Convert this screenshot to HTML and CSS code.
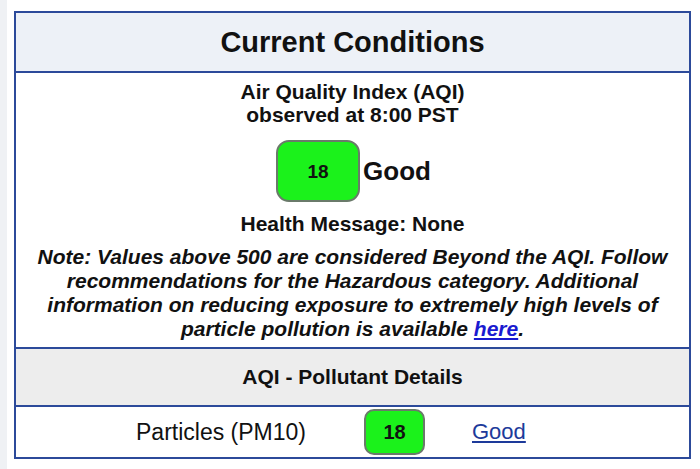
FILE: index.html
```html
<!DOCTYPE html>
<html lang="en">
<head>
    <meta charset="UTF-8">
    <title>Current Conditions</title>
    <link rel="stylesheet" href="styles.css">
</head>
<body>
    <div class="panel">
        <div class="panel-title">Current Conditions</div>
        <div class="current">
            <div class="observed">Air Quality Index (AQI)<br>observed at 8:00 PST</div>
            <div class="reading">
                <span class="badge badge-big">18</span>
                <span class="category">Good</span>
            </div>
            <div class="health">Health Message: None</div>
            <div class="note">
                Note: Values above 500 are considered Beyond the AQI. Follow recommendations for the Hazardous category. Additional information on reducing exposure to extremely high levels of particle pollution is available <a href="#!">here</a>.
            </div>
        </div>
        <div class="section-title">AQI - Pollutant Details</div>
        <div class="pollutant">
            <span class="pollutant-name">Particles (PM10)</span>
            <span class="badge badge-small">18</span>
            <a href="#!" class="pollutant-link">Good</a>
        </div>
    </div>
</body>
</html>
```

FILE: styles.css
```css
body {
    margin: 0;
    background-color: white;
    border-left: 7px solid #eff1f4;
    min-height: 469px;
    box-sizing: border-box;
    font-family: 'Liberation Sans', Arial, Helvetica, sans-serif;
    color: #111;
}

.panel {
    margin: 11px 9px 0 7px;
    border: 2px solid #2c4a9a;
}

.panel-title {
    background-color: #edf1f7;
    border-bottom: 2px solid #2c4a9a;
    height: 58px;
    line-height: 58px;
    text-align: center;
    font-size: 29px;
    font-weight: bold;
}

.current {
    text-align: center;
    padding: 7px 10px 6px 10px;
    font-size: 21px;
    font-weight: bold;
    line-height: 23px;
}

.reading {
    display: flex;
    justify-content: center;
    align-items: center;
    gap: 3px;
    margin: 14px 0 10px 0;
    padding-left: 2px;
}

.badge {
    display: flex;
    align-items: center;
    justify-content: center;
    background-color: #1bf21b;
    border: 2px solid #6a7a6a;
    box-sizing: border-box;
    color: #111;
}

.badge-big {
    width: 84px;
    height: 62px;
    border-radius: 13px;
    font-size: 19px;
    font-weight: bold;
}

.category {
    font-size: 26px;
    font-weight: bold;
}

.health {
    margin-bottom: 10px;
}

.note {
    font-style: italic;
    line-height: 24px;
}

.note a {
    color: #1a1ad0;
}

.section-title {
    background-color: #ededed;
    border-top: 2px solid #2c4a9a;
    border-bottom: 2px solid #2c4a9a;
    height: 56px;
    line-height: 56px;
    text-align: center;
    font-size: 21px;
    font-weight: bold;
}

.pollutant {
    display: flex;
    align-items: center;
    height: 50px;
    padding-left: 120px;
    font-size: 23px;
}

.pollutant-name {
    width: 171px;
}

.badge-small {
    width: 61px;
    height: 46px;
    margin-left: 57px;
    border-radius: 10px;
    font-size: 20px;
    font-weight: bold;
}

.pollutant-link {
    margin-left: 47px;
    font-size: 22px;
    color: #1d3a9a;
}
```
